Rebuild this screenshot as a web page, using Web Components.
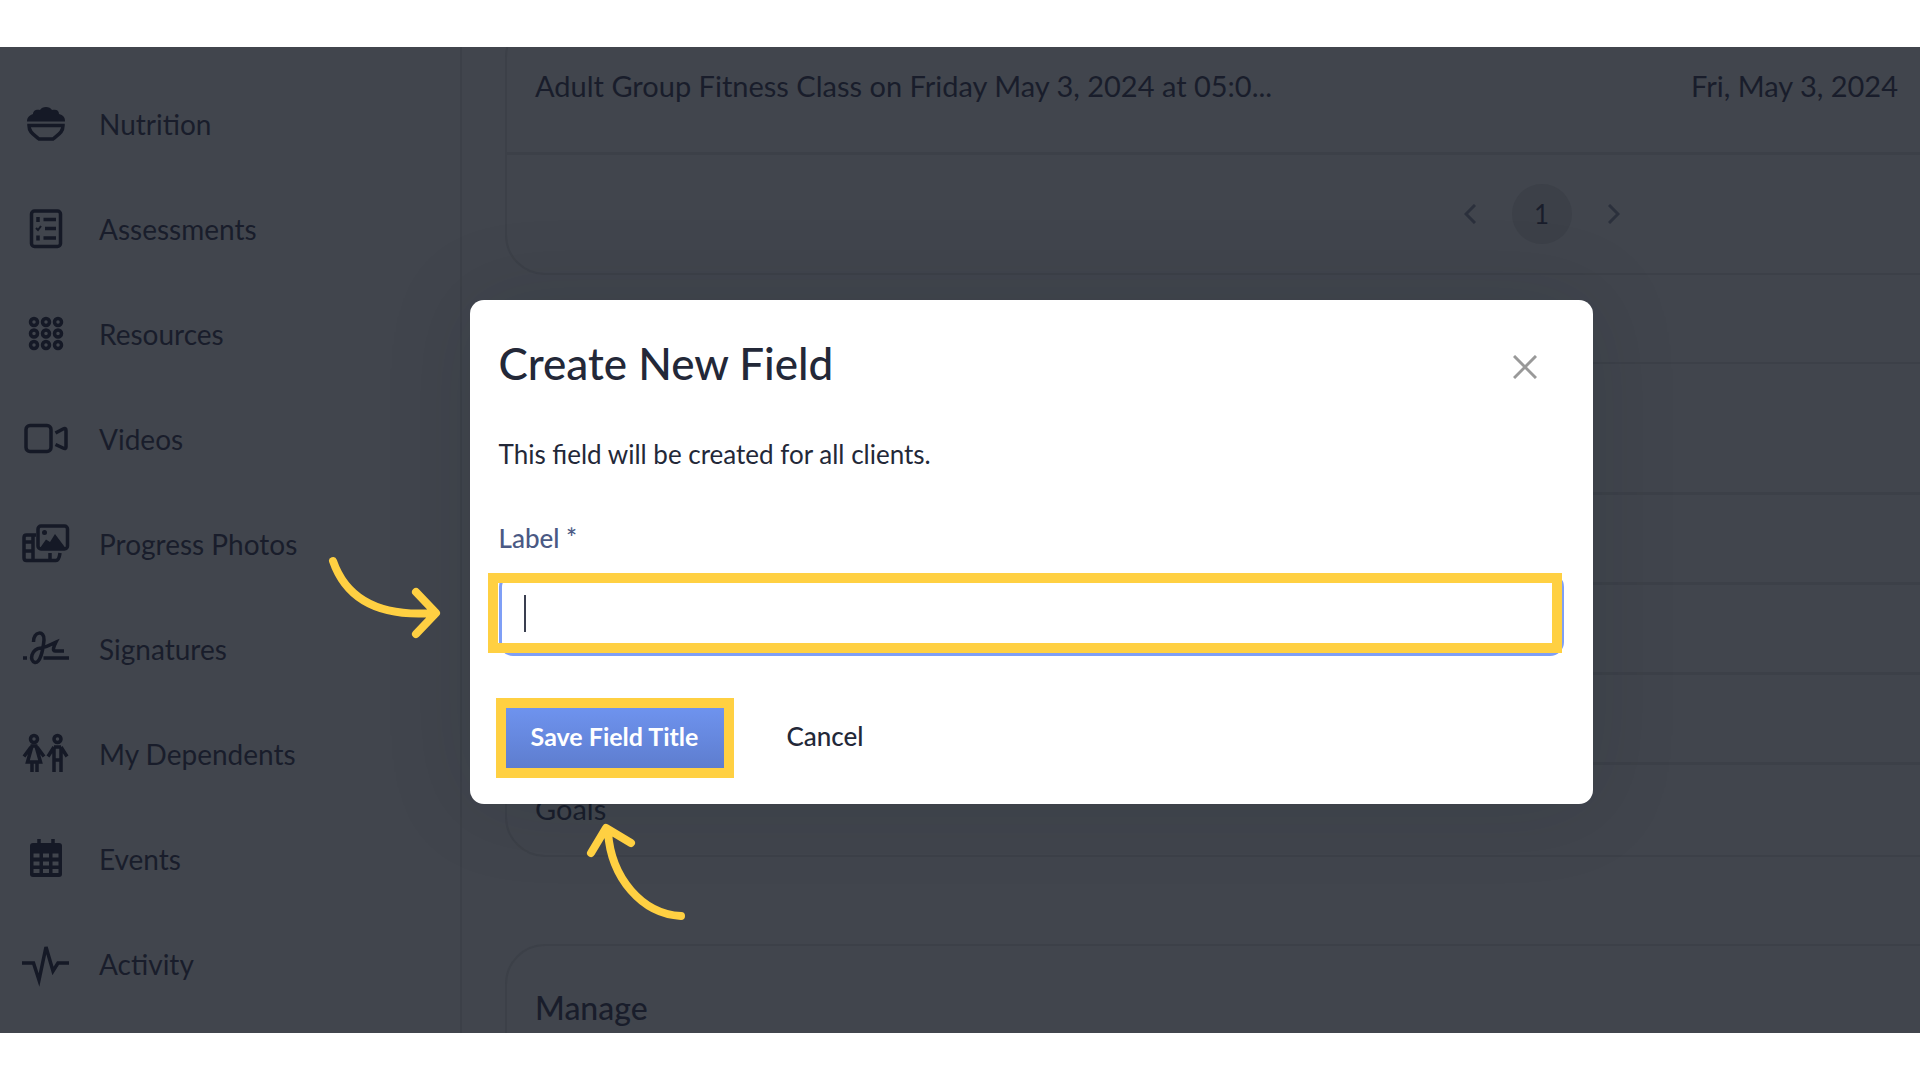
<!DOCTYPE html>
<html lang="en">
<head>
<meta charset="utf-8">
<title>Create New Field</title>
<style>
    :root {
        --surface: #41454d;
        --line: #3c4048;
        --ink: #191d2b;
        --heading: #232838;
        --mark: #ffd042;
    }
    body {
        margin: 0;
        box-sizing: border-box;
        min-height: 100vh;
        padding: 47px 0;
        display: grid;
        background: #fff;
        font-family: Lato, "Liberation Sans", sans-serif;
        font-size: 29px;
        line-height: 36px;
        color: var(--ink);
    }
</style>
</head>
<body>
<app-shell>
    <nav-item slot="nav" icon="nutrition">Nutrition</nav-item>
    <nav-item slot="nav" icon="assessments">Assessments</nav-item>
    <nav-item slot="nav" icon="resources">Resources</nav-item>
    <nav-item slot="nav" icon="videos">Videos</nav-item>
    <nav-item slot="nav" icon="photos">Progress Photos</nav-item>
    <nav-item slot="nav" icon="signatures">Signatures</nav-item>
    <nav-item slot="nav" icon="dependents">My Dependents</nav-item>
    <nav-item slot="nav" icon="events">Events</nav-item>
    <nav-item slot="nav" icon="activity">Activity</nav-item>

    <panel-card>
        <class-table></class-table>
        <page-switch page="1"></page-switch>
    </panel-card>
    <panel-card>
        <card-row size="large"></card-row>
        <card-row></card-row>
        <card-row></card-row>
        <card-row></card-row>
        <card-row>Goals</card-row>
    </panel-card>
    <panel-card>
        <card-title>Manage</card-title>
    </panel-card>

    <modal-box slot="modal" heading="Create New Field">
        <p slot="text">This field will be created for all clients.</p>
        <text-field label="Label *"></text-field>
        <action-button slot="actions" type="primary">Save Field Title</action-button>
        <action-button slot="actions">Cancel</action-button>
    </modal-box>

    <hint-arrow slot="hints" to="field"></hint-arrow>
    <hint-arrow slot="hints" to="save"></hint-arrow>
</app-shell>

<script>
class AppShell extends HTMLElement {
    constructor() {
        super();
        const shadowRoot = this.attachShadow({mode: "open"});
        shadowRoot.innerHTML = `
        <style>
            :host {
                position: relative;
                display: grid;
                grid-template-columns: 462px minmax(0, 1fr);
                overflow: hidden;
                background: var(--surface);
            }
            nav {
                box-sizing: border-box;
                padding-top: 24px;
                border-right: 2px solid var(--line);
                font-size: 28px;
            }
            main {
                display: flex;
                flex-direction: column;
                gap: 87px;
                height: 0;
                margin-top: -30px;
                padding-left: 43px;
            }
            .overlay {
                position: absolute;
                inset: 0;
                display: flex;
                align-items: center;
                justify-content: center;
                padding: 24px 0 0 142px;
            }
        </style>
        <nav aria-label="Client"><slot name="nav"></slot></nav>
        <main><slot></slot></main>
        <div class="overlay"><slot name="modal"></slot></div>
        <slot name="hints"></slot>
        `;
    }
}

const icons = {
    nutrition: `
        <path class="fill" d="M5 17.500C5 13 8 11 11 10C11 6 15 5 18 6C20 2 28 2 30 6C34 5 37 6 37 10C41 11 43 13 43 17.500Z"/>
        <path d="M7 21.500H41C41 28 37 30 31 35H17C11 30 7 28 7 21.500Z"/>`,
    assessments: `
        <rect x="9.500" y="2" width="29" height="35.500" rx="3"/>
        <path d="M21.500 10.500H34M23 19.500H34M21.500 29H34"/>
        <path d="M14 19L16 21L19 17" stroke-width="2"/>
        <path d="M16 8V13M16 26.500V31.500"/>`,
    resources: [8, 19.5, 31].map(y => [12, 24, 36].map(x =>
        `<circle cx="${x}" cy="${y}" r="3.500"/>`).join("")).join(""),
    videos: `
        <rect x="4" y="6.500" width="25" height="26" rx="4"/>
        <path d="M33.500 14L41 10Q44 8.500 44 11.500V28Q44 30.500 41 29L33.500 25.500"/>`,
    photos: `
        <rect x="16" y="2" width="29.500" height="23" rx="3"/>
        <path class="fill" d="M18 24L24 15.500L28 18L33 10L43.500 24Z"/>
        <circle class="fill" cx="22.500" cy="8.500" r="2.500"/>
        <path d="M14 11H4.500Q2 11 2 13.500V34Q2 36.500 4.500 36.500H34Q37 36.500 38 29M11 11V36M28 29V36M3 18H10M3 27H10"/>`,
    signatures: `
        <path d="M11.500 13C11 2 23 1 22 11C21 22 18 34 13 33.500C7 32 9 20 19 19C26 18 29 15 34 13C32 17 30 22 33 22H42M21.500 29H47M1 29H5"/>`,
    dependents: `
        <circle cx="12" cy="5" r="3.500"/>
        <path d="M9 13L2 22.500M15 13L22 22.500M10 12L5.500 28H18.500L14 12ZM10 28V38M15 28V38"/>
        <circle cx="35.500" cy="5" r="3.500"/>
        <path d="M32 13L26 22.500M39 13L45 22.500M32 13V38M39 13V38M32 13H39M32 26H39"/>`,
    events: `
        <path d="M17 0V6M31 0V6"/>
        <rect class="fill" x="8" y="4" width="32" height="34" rx="3"/>
        ${[14.5, 22.5, 30].map(y => [11.5, 21, 30.5].map(x =>
            `<rect class="hole" x="${x}" y="${y}" width="6" height="4"/>`).join("")).join("")}`,
    activity: `<path d="M0 19H11.500L17 36L24 3L31 27L36 19H47"/>`
};

class NavItem extends HTMLElement {
    constructor() {
        super();
        const shadowRoot = this.attachShadow({mode: "open"});
        shadowRoot.innerHTML = `
        <style>
            :host {
                display: block;
            }
            a {
                display: flex;
                align-items: center;
                gap: 29px;
                height: 105px;
                padding-left: 22px;
                color: inherit;
                text-decoration: none;
            }
            svg {
                width: 48px;
                height: 40px;
                overflow: visible;
                fill: none;
                stroke: #151926;
                stroke-width: 3.5;
            }
            .fill {
                fill: #151926;
                stroke: none;
            }
            .hole {
                fill: var(--surface);
                stroke: none;
            }
        </style>
        <a href="#${this.getAttribute("icon")}">
            <svg viewBox="0 0 48 40" aria-hidden="true">${icons[this.getAttribute("icon")]}</svg>
            <slot></slot>
        </a>
        `;
    }
}

class PanelCard extends HTMLElement {
    constructor() {
        super();
        const shadowRoot = this.attachShadow({mode: "open"});
        // cards run on past the right edge of the window
        shadowRoot.innerHTML = `
        <style>
            :host {
                display: block;
                flex: none;
                box-sizing: border-box;
                width: calc(100% + 658px);
                border: 2px solid var(--line);
                border-radius: 40px;
            }
        </style>
        <slot></slot>
        `;
    }
}

class ClassTable extends HTMLElement {
    constructor() {
        super();
        const shadowRoot = this.attachShadow({mode: "open"});
        shadowRoot.innerHTML = `
        <style>
            :host {
                display: block;
            }
            table {
                width: 100%;
                table-layout: fixed;
                border-collapse: collapse;
            }
            td {
                height: 133px;
                padding: 0 0 0 28px;
                border-bottom: 3px solid var(--line);
            }
            td:first-child {
                width: 1128px;
            }
        </style>
        <table>
            <tr>
                <td>Adult Group Fitness Class on Friday May 3, 2024 at 05:0...</td>
                <td>Fri, May 3, 2024</td>
            </tr>
        </table>
        `;
    }
}

class PageSwitch extends HTMLElement {
    constructor() {
        super();
        const shadowRoot = this.attachShadow({mode: "open"});
        shadowRoot.innerHTML = `
        <style>
            :host {
                display: flex;
                align-items: center;
                justify-content: center;
                gap: 30px;
                height: 118px;
            }
            button {
                display: grid;
                place-items: center;
                width: 24px;
                height: 60px;
                padding: 0;
                border: 0;
                background: none;
                font: inherit;
                font-size: 26px;
                color: inherit;
            }
            .current {
                width: 60px;
                border-radius: 50%;
                background: #3c4048;
            }
            svg {
                width: 12px;
                height: 20px;
                fill: none;
                stroke: #2b303c;
                stroke-width: 3;
            }
        </style>
        <button aria-label="Previous page"><svg viewBox="0 0 12 20"><path d="M11 1L2 10L11 19"/></svg></button>
        <button class="current">${this.getAttribute("page")}</button>
        <button aria-label="Next page"><svg viewBox="0 0 12 20"><path d="M1 1L10 10L1 19"/></svg></button>
        `;
    }
}

class CardRow extends HTMLElement {
    constructor() {
        super();
        const shadowRoot = this.attachShadow({mode: "open"});
        shadowRoot.innerHTML = `
        <style>
            :host {
                display: flex;
                align-items: center;
                box-sizing: border-box;
                height: 90px;
                padding: 0 28px 2px;
                border-bottom: 3px solid var(--line);
            }
            :host([size="large"]) {
                height: 131px;
            }
            :host(:last-child) {
                border-bottom: 0;
            }
        </style>
        <slot></slot>
        `;
    }
}

class CardTitle extends HTMLElement {
    constructor() {
        super();
        const shadowRoot = this.attachShadow({mode: "open"});
        shadowRoot.innerHTML = `
        <style>
            :host {
                display: block;
                padding: 42px 28px;
            }
            h2 {
                margin: 0;
                font-size: 32px;
                font-weight: 500;
                line-height: 40px;
            }
        </style>
        <h2><slot></slot></h2>
        `;
    }
}

class ModalBox extends HTMLElement {
    constructor() {
        super();
        const shadowRoot = this.attachShadow({mode: "open"});
        shadowRoot.innerHTML = `
        <style>
            :host {
                display: block;
                box-sizing: border-box;
                width: 1123px;
                padding: 37px 29px 33px;
                border-radius: 14px;
                background: #fff;
                box-shadow: 0 0 90px rgba(20, 24, 30, .12);
                font-size: 26px;
                line-height: 32px;
                color: var(--heading);
            }
            header {
                display: flex;
                align-items: center;
                justify-content: space-between;
                padding-right: 27px;
            }
            h1 {
                margin: 0;
                font-size: 44px;
                font-weight: 500;
                line-height: 52px;
            }
            button {
                display: grid;
                padding: 8px 0 0;
                border: 0;
                background: none;
            }
            svg {
                width: 24px;
                height: 24px;
                stroke: #999;
                stroke-width: 3;
            }
            ::slotted(p) {
                margin: 49px 0 52px;
            }
            footer {
                display: flex;
                align-items: center;
                gap: 56px;
                margin-top: 49px;
            }
        </style>
        <header>
            <h1>${this.getAttribute("heading")}</h1>
            <button aria-label="Close"><svg viewBox="0 0 24 24"><path d="M1 1L23 23M23 1L1 23"/></svg></button>
        </header>
        <slot name="text"></slot>
        <slot></slot>
        <footer><slot name="actions"></slot></footer>
        `;
    }
}

class TextField extends HTMLElement {
    constructor() {
        super();
        const shadowRoot = this.attachShadow({mode: "open"});
        shadowRoot.innerHTML = `
        <style>
            :host {
                display: block;
            }
            label {
                display: block;
                margin-bottom: 19px;
                font-weight: 500;
                color: #4a5984;
            }
            .box {
                position: relative;
            }
            input {
                display: block;
                box-sizing: border-box;
                width: 100%;
                height: 83px;
                padding: 0 24px;
                border: 3px solid #7f9ff6;
                border-radius: 14px;
                outline: 0;
                /* text cursor */
                background: linear-gradient(#3a3f50, #3a3f50) 22px 19px / 2px 37px no-repeat #fff;
                font: inherit;
                color: inherit;
            }
            .box::after {
                content: "";
                position: absolute;
                inset: 0 2px 3px -11px;
                border: 10px solid var(--mark);
                pointer-events: none;
            }
        </style>
        <label for="field">${this.getAttribute("label")}</label>
        <div class="box"><input id="field" type="text" required></div>
        `;
    }
}

class ActionButton extends HTMLElement {
    constructor() {
        super();
        const shadowRoot = this.attachShadow({mode: "open"});
        shadowRoot.innerHTML = `
        <style>
            :host {
                position: relative;
                display: block;
            }
            button {
                height: 66px;
                padding: 0 0 5px;
                border: 0;
                background: none;
                font: inherit;
                font-weight: 500;
                color: inherit;
                cursor: pointer;
            }
            :host([type="primary"]) button {
                width: 232px;
                background: linear-gradient(#6f94f0, #5d7ccd);
                font-size: 25px;
                font-weight: 700;
                color: #fff;
            }
            :host([type="primary"])::after {
                content: "";
                position: absolute;
                inset: -7px -3px;
                border: 10px solid var(--mark);
                pointer-events: none;
            }
        </style>
        <button><slot></slot></button>
        `;
    }
}

class HintArrow extends HTMLElement {
    constructor() {
        super();
        const shadowRoot = this.attachShadow({mode: "open"});
        const path = this.getAttribute("to") === "field"
            ? "M5 5C14 31 37 62 105 57M88 36L108 57L88 78"
            : "M95 96C56 94 25 58 22 12M5 33L20 8L45 23";
        shadowRoot.innerHTML = `
        <style>
            :host {
                position: absolute;
                display: block;
            }
            :host([to="field"]) {
                left: 328px;
                top: 509px;
            }
            :host([to="save"]) {
                left: 586px;
                top: 773px;
            }
            svg {
                display: block;
                width: 114px;
                height: 102px;
                fill: none;
                stroke: var(--mark);
                stroke-width: 8;
                stroke-linecap: round;
                stroke-linejoin: round;
            }
        </style>
        <svg viewBox="0 0 114 102" aria-hidden="true"><path d="${path}"/></svg>
        `;
    }
}

customElements.define("app-shell", AppShell);
customElements.define("nav-item", NavItem);
customElements.define("panel-card", PanelCard);
customElements.define("class-table", ClassTable);
customElements.define("page-switch", PageSwitch);
customElements.define("card-row", CardRow);
customElements.define("card-title", CardTitle);
customElements.define("modal-box", ModalBox);
customElements.define("text-field", TextField);
customElements.define("action-button", ActionButton);
customElements.define("hint-arrow", HintArrow);
</script>
</body>
</html>
